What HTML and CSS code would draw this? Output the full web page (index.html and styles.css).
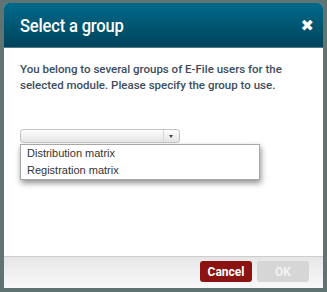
FILE: index.html
```html
<!DOCTYPE html>
<html lang="en">
<head>
  <meta charset="UTF-8">
  <title>Select a group</title>
  <link rel="stylesheet" href="styles.css">
</head>
<body>
  <div class="dialog">
    <div class="dialog-header">
      <h1>Select a group</h1>
      <span class="close">&#10006;</span>
    </div>
    <div class="dialog-body">
      <p>You belong to several groups of E-File users for the selected module. Please specify the group to use.</p>
      <div class="combo">
        <div class="select">
          <span class="arrow"></span>
        </div>
        <ul class="options">
          <li>Distribution matrix</li>
          <li>Registration matrix</li>
        </ul>
      </div>
    </div>
    <div class="dialog-footer">
      <button class="btn btn-cancel">Cancel</button>
      <button class="btn btn-ok" disabled>OK</button>
    </div>
  </div>
</body>
</html>
```
FILE: styles.css
```css
* {
  margin: 0;
  padding: 0;
  box-sizing: border-box;
}

body {
  background: #5f7373;
  padding: 3px 4px 4px 4px;
  font-family: 'Roboto', sans-serif;
}

.dialog {
  width: 319px;
  height: 285px;
  background: #fff;
  border-radius: 5px 5px 0 0;
  display: flex;
  flex-direction: column;
  overflow: hidden;
}

.dialog-header {
  height: 45px;
  background: linear-gradient(#006a8c, #00435a);
  display: flex;
  align-items: center;
  justify-content: space-between;
  padding: 0 9px 0 16px;
  border-bottom: 1px solid #4d7b8a;
}

.dialog-header h1 {
  color: #fff;
  font-size: 18px;
  font-weight: 500;
  letter-spacing: -0.2px;
  transform: scaleX(0.92);
  transform-origin: left center;
}

.close {
  color: #fff;
  font-size: 16px;
  font-family: 'DejaVu Sans', sans-serif;
  font-weight: bold;
}

.dialog-body {
  flex: 1;
  padding: 13px 16px 0 16px;
}

.dialog-body p {
  color: #3c4d5e;
  font-size: 11.5px;
  font-weight: 500;
  line-height: 16px;
}

.combo {
  margin-top: 36px;
  width: 240px;
}

.select {
  width: 160px;
  height: 14px;
  border: 1px solid #c3c3c3;
  border-radius: 3px;
  background: linear-gradient(#fdfdfd, #e4e4e4);
  position: relative;
}

.arrow {
  position: absolute;
  right: 0;
  top: 0;
  width: 16px;
  height: 12px;
  border-left: 1px solid #d6d6d6;
}

.arrow::after {
  content: "";
  position: absolute;
  left: 5px;
  top: 5px;
  border-left: 2px solid transparent;
  border-right: 2px solid transparent;
  border-top: 3px solid #444;
}

.options {
  list-style: none;
  margin-top: 1px;
  border: 1px solid #a8a8a8;
  background: #fff;
  box-shadow: 1px 3px 6px rgba(0, 0, 0, 0.45);
}

.options li {
  font-family: 'Liberation Sans', Arial, sans-serif;
  font-size: 11px;
  color: #333;
  padding: 0 6px;
  height: 17px;
  line-height: 17px;
}

.dialog-footer {
  height: 32px;
  border-top: 1px solid #cdcdcd;
  background: linear-gradient(#e6e6e6, #f9f9f9);
  display: flex;
  justify-content: flex-end;
  align-items: flex-start;
  gap: 5px;
  padding: 4px 14px 0 0;
}

.btn {
  width: 52px;
  height: 21px;
  border: none;
  border-radius: 3px;
  font-family: 'Roboto', sans-serif;
  font-size: 12px;
  font-weight: bold;
}

.btn-cancel {
  background: #8b1312;
  color: #fff;
}

.btn-ok {
  background: #d6d6d6;
  color: #f2f2f2;
}
```
